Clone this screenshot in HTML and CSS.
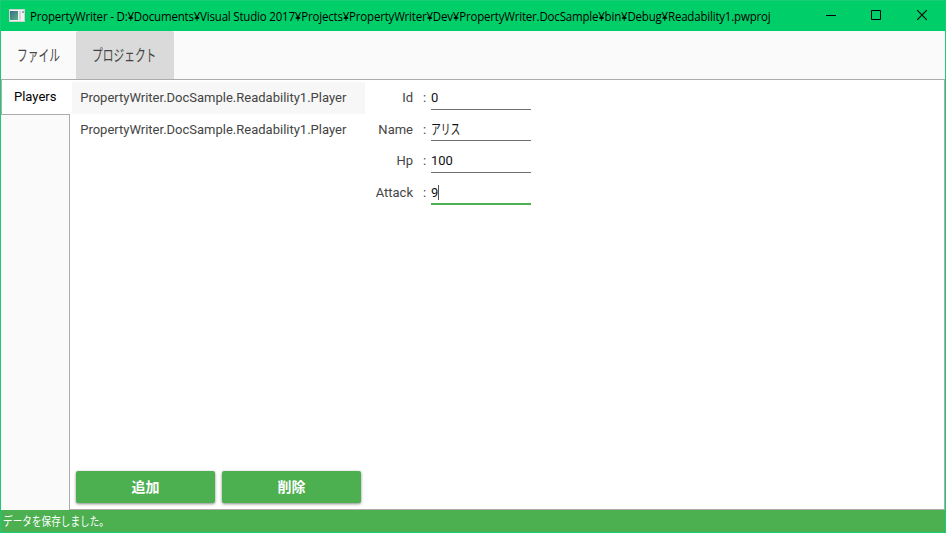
FILE: index.html
```html
<!DOCTYPE html>
<html lang="ja">
<head>
<meta charset="utf-8">
<title>PropertyWriter</title>
<link rel="stylesheet" href="styles.css">
</head>
<body>
<div class="window">
  <header class="titlebar">
    <svg class="app-icon" width="16" height="14" viewBox="0 0 16 14">
      <defs><linearGradient id="pane" x1="0" y1="0" x2="1" y2="1"><stop offset="0" stop-color="#3e6790"/><stop offset="1" stop-color="#58b47c"/></linearGradient></defs>
      <rect x=".5" y=".5" width="15" height="12" fill="#f2f2f2" stroke="#cfd2d0"/>
      <rect x="1" y="2" width="8" height="9" fill="url(#pane)"/>
      <rect x="10" y="2" width="2" height="9" fill="#d3d7db"/>
      <rect x="13" y="2" width="2" height="2" fill="#9da5ac"/>
    </svg>
    <h1 class="title">PropertyWriter - D:¥Documents¥Visual Studio 2017¥Projects¥PropertyWriter¥Dev¥PropertyWriter.DocSample¥bin¥Debug¥Readability1.pwproj</h1>
    <div class="controls">
      <svg width="46" height="30" viewBox="0 0 46 30"><path d="M16 14.5h10" stroke="#000"/></svg>
      <svg width="46" height="30" viewBox="0 0 46 30"><path d="M15.500 9.500h9v9h-9z" fill="none" stroke="#000"/></svg>
      <svg width="46" height="30" viewBox="0 0 46 30"><path d="M15.200 9.200l9.600 9.600M24.800 9.200l-9.600 9.600" stroke="#000" stroke-width="1.100"/></svg>
    </div>
  </header>
  <nav class="menu">
    <div class="menu-item file"><span class="kana">ファイル</span></div>
    <div class="menu-item active"><span class="kana">プロジェクト</span></div>
  </nav>
  <main class="main">
    <aside class="tabs"><div class="tab">Players</div></aside>
    <section class="content">
      <div class="list-pane">
        <ul class="list">
          <li class="selected">PropertyWriter.DocSample.Readability1.Player</li>
          <li>PropertyWriter.DocSample.Readability1.Player</li>
        </ul>
        <div class="actions"><button>追加</button><button>削除</button></div>
      </div>
      <div class="form">
        <div class="row"><label>Id</label><i>:</i><div class="field">0</div></div>
        <div class="row name"><label>Name</label><i>:</i><div class="field"><span class="kana">アリス</span></div></div>
        <div class="row hp"><label>Hp</label><i>:</i><div class="field">100</div></div>
        <div class="row"><label>Attack</label><i>:</i><div class="field focused">9<b class="caret"></b></div></div>
      </div>
    </section>
  </main>
  <footer class="status"><span class="kana">データを保存しました。</span></footer>
</div>
</body>
</html>
```
FILE: styles.css
```css
* { box-sizing: border-box; }
body { margin: 0; font: 13px Roboto, "Noto Sans CJK JP", sans-serif; color: #444; }
.window { width: 946px; height: 533px; border: 1px solid #19cb75; display: flex; flex-direction: column; background: #fafafa; overflow: hidden; }
.titlebar { height: 30px; flex: none; background: #00ce69; display: flex; align-items: center; padding-left: 8px; }
.app-icon { margin-right: 5px; flex: none; }
.title { margin: 0; font: 12px "Open Sans", "Noto Sans", sans-serif; color: #000; white-space: nowrap; letter-spacing: -.2px; width: 770px; transform: scaleX(.9585); transform-origin: left; }
.controls { display: flex; margin-left: auto; flex: none; margin-right: -3px; }
.controls svg { display: block; }
.kana { display: inline-block; transform-origin: left center; white-space: nowrap; }
.menu { height: 48px; flex: none; display: flex; font-size: 16px; }
.menu-item { height: 48px; line-height: 50px; padding-left: 15.5px; width: 75px; }
.menu-item.active { width: 98px; background: #dadada; border-radius: 2px 2px 0 0; }
.menu .kana { transform: scaleX(.67); }
.main { flex: 1; display: flex; min-height: 0; }
.tabs { width: 68px; flex: none; border-top: 1px solid #acacac; }
.tab { position: relative; width: 69px; height: 35px; line-height: 33px; padding-left: 12px; background: #fff; border-left: 1px solid #acacac; border-bottom: 1px solid #acacac; color: #000; }
.content { flex: 1; display: flex; background: #fff; border: 1px solid #acacac; padding: 2px 0 0 2px; }
.list-pane { width: 293px; display: flex; flex-direction: column; }
.list { margin: 0; padding: 0; list-style: none; }
.list li { height: 32px; line-height: 31px; padding-left: 8.2px; white-space: nowrap; }
.selected { background: #f7f7f7; }
.actions { margin: auto 0 6px 4px; display: flex; gap: 7px; }
button { width: 139px; height: 32px; border: 0; border-radius: 2px; padding: 0 0 2px; background: #4caf50; color: #fff; font: bold 14px/30px "Noto Sans CJK JP", sans-serif; box-shadow: 0 1px 3px #0007; }
.form { padding-left: 6px; }
.row { display: flex; height: 31.6px; }
.row label { width: 42px; text-align: right; line-height: 31px; }
.row i { width: 18px; padding-left: 10px; font-style: normal; line-height: 31px; }
.hp label, .hp i { line-height: 32.5px; }
.field { width: 100px; height: 28px; line-height: 31px; border-bottom: 1px solid #707070; color: #111; white-space: nowrap; }
.name .field { height: 27px; line-height: 30px; }
.field .kana { font-size: 14px; transform: scaleX(.7); }
.focused { border-bottom: 2px solid #4caf50; }
.caret { display: inline-block; width: 1px; height: 15px; background: #555; vertical-align: -3px; }
.status { height: 22px; flex: none; background: #4caf50; color: #fff; line-height: 23px; padding-left: 2px; font-size: 12.5px; }
.status .kana { transform: scaleX(.77); }
```
